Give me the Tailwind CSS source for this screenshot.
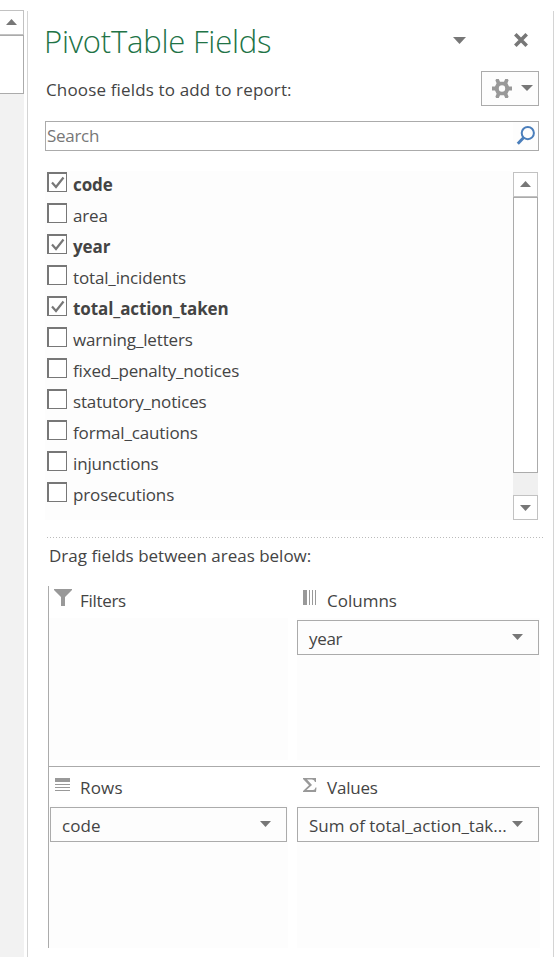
<!DOCTYPE html>
<html lang="en">
<head>
<meta charset="utf-8">
<title>PivotTable Fields</title>
<script src="https://cdn.jsdelivr.net/npm/@tailwindcss/browser@4"></script>
</head>
<body class="w-[555px] h-[957px] overflow-hidden bg-white flex font-['Open_Sans','Noto_Sans',sans-serif] text-[17px] leading-[24px] text-[#444] whitespace-nowrap">
<div class="w-6 shrink-0 pt-[10px] flex flex-col">
  <div class="h-[25px] border border-l-0 border-[#c2c2c2] pl-[6px] pt-[8px]"><svg class="block" width="11" height="6" fill="#777"><path d="M0 6L5.5 0L11 6z"/></svg></div>
  <div class="h-[59px] border border-l-0 border-[#ababab]"></div>
  <div class="flex-1 bg-[#f2f2f2]"></div>
</div>
<main class="ml-[3px] mt-[11px] w-[527px] shrink-0 border-x border-[#d4d4d4] pl-[17px] flex flex-col">
  <header class="h-[60px] w-[494px] flex">
    <h1 class="w-[408px] text-[31px] leading-[40px] pt-[10px] font-light tracking-[-0.2px] -indent-px text-[#217346]">PivotTable Fields</h1>
    <svg class="mt-[26px]" width="13" height="7" fill="#777"><path d="M0 0H13L6.5 7z"/></svg>
    <svg class="ml-[48px] mt-[22px]" width="14" height="14" fill="none" stroke="#777" stroke-width="3.6"><path d="M1.3 1.3L12.7 12.7M12.7 1.3L1.3 12.7"/></svg>
  </header>
  <div class="h-[50px] w-[494px] flex justify-between">
    <p class="pl-px pt-[7px]"><span class="tracking-[0.15px]">Choose fields to add to report:</span></p>
    <button class="w-[58px] h-[35px] border border-[#ababab] bg-[#fdfdfd] flex pl-[10px]">
      <svg class="mt-[7px]" width="20" height="19" viewBox="-10 -9.5 20 19" fill="#999"><path fill-rule="evenodd" d="M-5.8-9.5H-3.2L-2-6.7H2L3.2-9.5H5.8L6.6-8.3L5.4-5.3L7-2H10V2H7L5.4 5.3L6.6 8.3L5.8 9.5H3.2L2 6.7H-2L-3.2 9.5H-5.8L-6.6 8.3L-5.4 5.3L-7 2H-10V-2H-7L-5.4-5.3L-6.6-8.3zM0-3.2A3.2 3.2 0 1 0 0 3.2A3.2 3.2 0 1 0 0-3.2z"/></svg>
      <svg class="ml-[9px] mt-[13px]" width="12" height="6" fill="#777"><path d="M0 0H12L6 6z"/></svg>
    </button>
  </div>
  <div class="h-[30px] w-[494px] border border-[#ababab] flex justify-between pl-px text-[#777]">
    <span class="pt-[2px] tracking-[-0.3px]">Search</span>
    <div class="w-[25px] bg-[#fdfdfd] pl-[3px] pt-[4px]"><svg width="19" height="20" fill="none" stroke="#4a7ebb"><circle cx="11.8" cy="7.1" r="6.1" stroke-width="2"/><path d="M7.5 11.8L1.8 17.7" stroke-width="3"/></svg></div>
  </div>
  <section class="mt-5 h-[349px] w-[494px] flex">
    <ul id="fields" class="w-[468px] bg-[#fdfdfd] pl-[2px] pt-px"></ul>
    <div class="w-[25px] mt-px flex flex-col bg-[#f0f0f0]">
      <div class="h-[25px] border border-[#c2c2c2] bg-white pl-[6px] pt-[8px]"><svg class="block" width="11" height="6" fill="#777"><path d="M0 6L5.5 0L11 6z"/></svg></div>
      <div class="h-[276px] border border-[#ababab] bg-white"></div>
      <div class="mt-[22px] h-[25px] border border-[#c2c2c2] bg-white pl-[6px] pt-[9px]"><svg class="block" width="11" height="6" fill="#777"><path d="M0 0H11L5.5 6z"/></svg></div>
    </div>
  </section>
  <div class="mt-[17px] ml-[2px] w-[496px] h-px bg-[repeating-linear-gradient(90deg,#bbb_0_1px,transparent_1px_3px)]"></div>
  <p class="h-[48px] pl-[4px] pt-[6px]"><span>Drag fields between areas below:</span></p>
  <section class="ml-[3px] w-[492px] border-l border-[#ababab]">
    <div class="h-[181px] border-b border-[#ababab] flex gap-[9px]">
      <div class="w-[239px]">
        <h2 class="h-[32px] flex pl-[5px]"><svg class="mt-[3px] mr-[8px]" width="18" height="18" fill="#999"><path d="M0 0H18V1L11 8V17H7V8L0 1z"/></svg><span class="pt-[3px] tracking-[-0.3px]">Filters</span></h2>
        <div class="h-[142px] bg-[#fdfdfd]"></div>
      </div>
      <div class="w-[243px]">
        <h2 class="h-[32px] flex pl-[6px]"><svg class="mt-[4px] mr-[11px]" width="13" height="15" fill="#999"><path d="M0 0H4V15H0zM6 0H7V15H6zM9 0H10V15H9zM12 0H13V15H12z"/></svg><span class="pt-[3px]">Columns</span></h2>
        <div class="h-[142px] bg-[#fdfdfd] pt-[2px]"><div class="w-[242px] h-[35px] border border-[#ababab] flex justify-between pl-[11px] pr-[15px]"><span class="pt-[6px] tracking-[-0.3px]">year</span><svg class="mt-[13px]" width="11" height="6" fill="#777"><path d="M0 0H11L5.5 6z"/></svg></div></div>
      </div>
    </div>
    <div class="h-[181px] flex gap-[9px]">
      <div class="w-[239px]">
        <h2 class="h-[38px] flex pl-[6px]"><svg class="mt-[11px] mr-[10px]" width="15" height="13" fill="#999"><path d="M0 0H15V4H0zM0 6H15V7H0zM0 9H15V10H0zM0 12H15V13H0z"/></svg><span class="pt-[9px] tracking-[0.2px]">Rows</span></h2>
        <div class="h-[143px] bg-[#fdfdfd] pt-[2px] pl-px"><div class="w-[237px] h-[35px] border border-[#ababab] flex justify-between pl-[11px] pr-[15px]"><span class="pt-[6px] tracking-[0.1px]">code</span><svg class="mt-[13px]" width="11" height="6" fill="#777"><path d="M0 0H11L5.5 6z"/></svg></div></div>
      </div>
      <div class="w-[243px]">
        <h2 class="h-[38px] flex pl-[6px]"><svg class="mt-[11px] mr-[10px]" width="14" height="14" fill="#999"><path d="M0 0H13V4H12Q11.5 1.5 9 1.5H4L9 7L3.5 12H10Q12 12 12.5 9.5H13.5L13 14H0V13L6 7.3L0 1z"/></svg><span class="pt-[9px] tracking-[-0.2px]">Values</span></h2>
        <div class="h-[143px] bg-[#fdfdfd] pt-[2px]"><div class="w-[242px] h-[35px] border border-[#ababab] flex justify-between pl-[11px] pr-[15px]"><span class="pt-[6px]">Sum of total_action_tak...</span><svg class="mt-[13px] shrink-0" width="11" height="6" fill="#777"><path d="M0 0H11L5.5 6z"/></svg></div></div>
      </div>
    </div>
  </section>
</main>
<script>
const fields = [['code',1],['area'],['year',1],['total_incidents'],['total_action_taken',1],['warning_letters'],['fixed_penalty_notices'],['statutory_notices'],['formal_cautions'],['injunctions'],['prosecutions']];
document.getElementById('fields').innerHTML = fields.map(([name, on]) => `<li class="h-[31px] flex"><span class="w-5 h-5 border-t-2 border-l-2 border-r border-b border-[#777] bg-white">${on ? '<svg class="block" width="17" height="17" fill="none" stroke="#777" stroke-width="2.2"><path d="M3 8.5L7 13L14.5 3.5"/></svg>' : ''}</span><span class="pl-[6px] pt-px ${on ? 'font-bold tracking-[-0.1px]' : 'tracking-[-0.15px]'}">${name}</span></li>`).join('');
</script>
</body>
</html>
